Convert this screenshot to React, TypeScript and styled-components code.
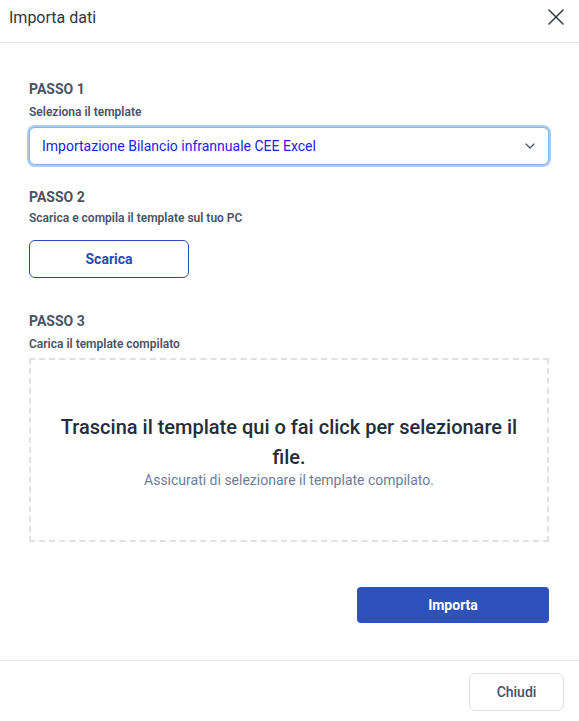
import React from "react";
import styled, { createGlobalStyle } from "styled-components";

const Global = createGlobalStyle`
  html, body { margin: 0; padding: 0; background: #ffffff; }
  body { font-family: Roboto, "Noto Sans", "Liberation Sans", sans-serif; }
  * { box-sizing: border-box; }
`;

const Dialog = styled.div`
  width: 579px;
  min-height: 721px;
  display: flex;
  flex-direction: column;
  background: #fff;
`;

const Header = styled.header`
  height: 43px;
  display: flex;
  align-items: center;
  justify-content: space-between;
  padding: 0 14px 0 9px;
  border-bottom: 1px solid #e9ecef;
`;

const Title = styled.h1`
  margin: 0;
  font-size: 16px;
  font-weight: 400;
  color: #2f3740;
  line-height: 20px;
  margin-top: -7px;
`;

const CloseButton = styled.button`
  border: 0;
  background: none;
  padding: 0;
  width: 18px;
  height: 18px;
  display: flex;
  align-items: center;
  justify-content: center;
  color: #343a40;
  cursor: pointer;
  margin-top: -8px;
`;

const Body = styled.main`
  padding: 36px 30px 37px 29px;
  display: flex;
  flex-direction: column;
`;

const Section = styled.section<{ $top: number }>`
  display: flex;
  flex-direction: column;
  margin-top: ${(p) => p.$top}px;
`;

const StepTitle = styled.h2`
  margin: 0;
  font-size: 14px;
  line-height: 20px;
  font-weight: 700;
  color: #4a5363;
`;

const StepHint = styled.p<{ $top: number }>`
  margin: ${(p) => p.$top}px 0 0;
  font-size: 12px;
  line-height: 16px;
  font-weight: 600;
  color: #4a5363;
`;

const SelectBox = styled.div`
  margin-top: 7px;
  height: 38px;
  border: 1px solid #86b4e4;
  border-radius: 6px;
  box-shadow: 0 0 0 2px #a9cdef;
  display: flex;
  align-items: center;
  justify-content: space-between;
  padding: 0 13px 0 12px;
  background: #fff;
`;

const SelectValue = styled.span`
  font-size: 14px;
  color: #2222f0;
`;

const OutlineButton = styled.button`
  margin-top: 14px;
  width: 160px;
  height: 38px;
  border: 1px solid #2a4bb0;
  border-radius: 6px;
  background: #fff;
  color: #2a4bb0;
  font-family: inherit;
  font-size: 14px;
  font-weight: 700;
`;

const DropZone = styled.div`
  margin-top: 6px;
  height: 184px;
  border: 2px dashed #dfe1e5;
  display: flex;
  flex-direction: column;
  align-items: center;
  justify-content: center;
  padding: 0 24px;
  text-align: center;
`;

const DropTitle = styled.div`
  font-size: 20px;
  line-height: 30px;
  font-weight: 500;
  color: #252d3a;
`;

const DropHint = styled.div`
  font-size: 14px;
  line-height: 18px;
  color: #6f7c99;
  margin-top: -1px;
`;

const Actions = styled.div`
  margin-top: 45px;
  display: flex;
  justify-content: flex-end;
`;

const PrimaryButton = styled.button`
  width: 192px;
  height: 36px;
  border: 0;
  border-radius: 4px;
  background: #2e51bc;
  color: #fff;
  font-family: inherit;
  font-size: 14px;
  font-weight: 700;
`;

const Footer = styled.footer`
  border-top: 1px solid #e9ecef;
  display: flex;
  justify-content: flex-end;
  padding: 12px 15px 10px;
`;

const SecondaryButton = styled.button`
  width: 95px;
  height: 38px;
  border: 1px solid #dde2ea;
  border-radius: 6px;
  background: #fff;
  color: #465066;
  font-family: inherit;
  font-size: 14px;
  font-weight: 500;
`;

export default function App() {
  return (
    <>
      <Global />
      <Dialog>
        <Header>
          <Title>Importa dati</Title>
          <CloseButton aria-label="Chiudi">
            <svg width="16" height="16" viewBox="0 0 16 16" fill="none">
              <path d="M1 1L15 15M15 1L1 15" stroke="currentColor" strokeWidth="1.5" strokeLinecap="round" />
            </svg>
          </CloseButton>
        </Header>
        <Body>
          <Section $top={0}>
            <StepTitle>PASSO 1</StepTitle>
            <StepHint $top={5}>Seleziona il template</StepHint>
            <SelectBox>
              <SelectValue>Importazione Bilancio infrannuale CEE Excel</SelectValue>
              <svg width="10" height="6" viewBox="0 0 10 6" fill="none">
                <path d="M1 1l4 4 4-4" stroke="#4a5363" strokeWidth="1.2" strokeLinecap="round" strokeLinejoin="round" />
              </svg>
            </SelectBox>
          </Section>
          <Section $top={22}>
            <StepTitle>PASSO 2</StepTitle>
            <StepHint $top={3}>Scarica e compila il template sul tuo PC</StepHint>
            <div>
              <OutlineButton>Scarica</OutlineButton>
            </div>
          </Section>
          <Section $top={33}>
            <StepTitle>PASSO 3</StepTitle>
            <StepHint $top={5}>Carica il template compilato</StepHint>
            <DropZone>
              <DropTitle>Trascina il template qui o fai click per selezionare il file.</DropTitle>
              <DropHint>Assicurati di selezionare il template compilato.</DropHint>
            </DropZone>
          </Section>
          <Actions>
            <PrimaryButton>Importa</PrimaryButton>
          </Actions>
        </Body>
        <Footer>
          <SecondaryButton>Chiudi</SecondaryButton>
        </Footer>
      </Dialog>
    </>
  );
}
